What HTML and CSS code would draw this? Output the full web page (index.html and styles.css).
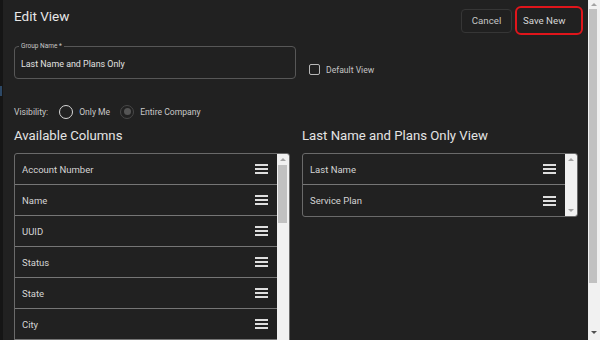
FILE: index.html
```html
<!DOCTYPE html>
<html>
<head>
<meta charset="utf-8">
<link rel="stylesheet" href="styles.css">
</head>
<body>
<div class="edge"><span class="edge-mark"></span></div>
<div class="dialog">
  <header class="head">
    <h1 class="title">Edit View</h1>
    <div class="actions">
      <button class="btn btn-cancel">Cancel</button>
      <button class="btn btn-save">Save New</button>
    </div>
  </header>
  <div class="form-row">
    <fieldset class="field">
      <legend class="field-label">Group Name *</legend>
      <div class="field-value">Last Name and Plans Only</div>
    </fieldset>
    <label class="check"><span class="check-box"></span><span class="check-text">Default View</span></label>
  </div>
  <div class="vis-row">
    <span class="vis-label">Visibility:</span>
    <span class="radio"></span><span class="radio-text">Only Me</span>
    <span class="radio radio-disabled"><span class="radio-dot"></span></span><span class="radio-text">Entire Company</span>
  </div>
  <div class="columns">
    <section class="col">
      <h2 class="col-title">Available Columns</h2>
      <div class="list list-tall">
        <ul class="items">
          <li class="item"><span>Account Number</span><svg class="drag" width="13" height="10" viewBox="0 0 13 10"><path d="M0 1h13M0 5h13M0 9h13"/></svg></li>
          <li class="item"><span>Name</span><svg class="drag" width="13" height="10" viewBox="0 0 13 10"><path d="M0 1h13M0 5h13M0 9h13"/></svg></li>
          <li class="item"><span>UUID</span><svg class="drag" width="13" height="10" viewBox="0 0 13 10"><path d="M0 1h13M0 5h13M0 9h13"/></svg></li>
          <li class="item"><span>Status</span><svg class="drag" width="13" height="10" viewBox="0 0 13 10"><path d="M0 1h13M0 5h13M0 9h13"/></svg></li>
          <li class="item"><span>State</span><svg class="drag" width="13" height="10" viewBox="0 0 13 10"><path d="M0 1h13M0 5h13M0 9h13"/></svg></li>
          <li class="item"><span>City</span><svg class="drag" width="13" height="10" viewBox="0 0 13 10"><path d="M0 1h13M0 5h13M0 9h13"/></svg></li>
        </ul>
        <div class="sbar">
          <span class="arr-box arr-top"><span class="arr arr-up"></span></span>
          <span class="thumb thumb-list"></span>
          <span class="sbar-fill"></span>
        </div>
      </div>
    </section>
    <section class="col">
      <h2 class="col-title">Last Name and Plans Only View</h2>
      <div class="list">
        <ul class="items">
          <li class="item"><span>Last Name</span><svg class="drag" width="13" height="10" viewBox="0 0 13 10"><path d="M0 1h13M0 5h13M0 9h13"/></svg></li>
          <li class="item"><span>Service Plan</span><svg class="drag" width="13" height="10" viewBox="0 0 13 10"><path d="M0 1h13M0 5h13M0 9h13"/></svg></li>
        </ul>
        <div class="sbar">
          <span class="arr-box arr-top"><span class="arr arr-up"></span></span>
          <span class="sbar-fill"></span>
          <span class="arr-box arr-bottom"><span class="arr arr-down"></span></span>
        </div>
      </div>
    </section>
  </div>
</div>
<div class="pagebar">
  <span class="arr-box page-top"><span class="arr arr-up"></span></span>
  <span class="thumb thumb-page"></span>
  <span class="sbar-fill"></span>
  <span class="arr-box page-bottom"><span class="arr arr-down"></span></span>
</div>
</body>
</html>
```

FILE: styles.css
```css
html, body {
  margin: 0;
  height: 340px;
  overflow: hidden;
}

body {
  display: flex;
  background: #212121;
  font-family: Roboto, "Liberation Sans", sans-serif;
  color: #d6d6d6;
}

.edge {
  width: 3px;
  flex-shrink: 0;
  background: #151515;
  display: flex;
  flex-direction: column;
}

.edge-mark {
  display: block;
  width: 2px;
  height: 10px;
  margin-top: 86px;
  background: #2c4866;
}

.dialog {
  flex: 1;
  min-width: 0;
  padding: 0 10px 0 11px;
  display: flex;
  flex-direction: column;
}

/* header */
.head {
  height: 42px;
  flex-shrink: 0;
  display: flex;
  justify-content: space-between;
  align-items: flex-start;
}

.title {
  margin: 8px 0 0;
  font-size: 13.5px;
  line-height: 16px;
  font-weight: 400;
  color: #e8e8e8;
}

.actions {
  margin-top: 6px;
  margin-right: -5px;
  display: flex;
  align-items: center;
  gap: 3px;
}

.btn {
  font-family: inherit;
  font-size: 9.7px;
  background: transparent;
  box-sizing: border-box;
  margin: 0;
  cursor: pointer;
}

.btn-cancel {
  height: 24px;
  width: 51px;
  padding: 0;
  border: 1px solid #363636;
  border-radius: 4px;
  color: #c4c4c4;
  background: #202020;
}

.btn-save {
  height: 29px;
  width: 68px;
  padding: 0 13px 0 6px;
  text-align: left;
  border: 2px solid #e0151b;
  border-radius: 6px;
  color: #d6d6d6;
}

/* form row */
.form-row {
  flex-shrink: 0;
  display: flex;
  align-items: flex-start;
  gap: 13px;
}

.field {
  width: 282px;
  box-sizing: border-box;
  margin: 0;
  padding: 0 4px;
  border: 1px solid #575757;
  border-radius: 4px;
}

.field-label {
  font-size: 6.5px;
  line-height: 9px;
  padding: 0 2px;
  color: #c6c6c6;
}

.field-value {
  font-size: 8.9px;
  line-height: 27px;
  padding-left: 2px;
  color: #e2e2e2;
}

.check {
  margin-top: 22px;
  display: flex;
  align-items: center;
  gap: 6px;
}

.check-box {
  width: 11px;
  height: 11px;
  box-sizing: border-box;
  border: 1.5px solid #b8b8b8;
  border-radius: 2px;
}

.check-text {
  font-size: 8.6px;
  color: #c4c4c4;
}

/* visibility */
.vis-row {
  margin-top: 23.5px;
  height: 18px;
  flex-shrink: 0;
  display: flex;
  align-items: center;
  font-size: 8.6px;
  color: #c8c8c8;
}

.vis-label {
  margin-right: 11px;
}

.radio {
  width: 14px;
  height: 14px;
  box-sizing: border-box;
  border: 1.5px solid #d8d8d8;
  border-radius: 50%;
  display: flex;
  align-items: center;
  justify-content: center;
  margin-right: 6px;
}

.radio-disabled {
  border-color: #474747;
}

.radio-dot {
  width: 7px;
  height: 7px;
  border-radius: 50%;
  background: #555;
}

.radio-text {
  margin-right: 10px;
}

/* columns */
.columns {
  margin-top: 7.5px;
  flex-shrink: 0;
  display: flex;
  gap: 12px;
}

.col {
  width: 276px;
}

.col-title {
  margin: 0 0 9px;
  font-size: 13.2px;
  line-height: 16px;
  font-weight: 400;
  color: #e4e4e4;
}

.list {
  display: flex;
  border: 1px solid #6a6a6a;
  border-radius: 3px;
  overflow: hidden;
}

.list-tall {
  height: 220px;
}

.items {
  flex: 1;
  margin: 0;
  padding: 0;
  list-style: none;
}

.item {
  height: 31px;
  box-sizing: border-box;
  border-bottom: 1px solid #767676;
  display: flex;
  align-items: center;
  justify-content: space-between;
  padding: 0 9px 0 7px;
  font-size: 9.5px;
  color: #d4d4d4;
}

.item:last-child {
  border-bottom: none;
}

.list-tall .item:last-child {
  border-bottom: 1px solid #767676;
}

.drag {
  display: block;
  stroke: #dedede;
  stroke-width: 1.8;
  fill: none;
}

/* scrollbars */
.sbar {
  width: 12px;
  flex-shrink: 0;
  background: #f1f1f1;
  display: flex;
  flex-direction: column;
}

.sbar-fill {
  flex: 1;
}

.arr-box {
  display: flex;
  align-items: center;
  justify-content: center;
  flex-shrink: 0;
}

.arr-top {
  height: 11px;
}

.arr-bottom {
  height: 12px;
}

.arr {
  width: 0;
  height: 0;
  border-left: 3px solid transparent;
  border-right: 3px solid transparent;
}

.arr-up {
  border-bottom: 3px solid #a3a3a3;
}

.arr-down {
  border-top: 3px solid #a3a3a3;
}

.thumb {
  display: block;
  background: #c1c1c1;
  flex-shrink: 0;
}

.thumb-list {
  height: 58px;
  margin: 0 2px 0 1px;
}

.pagebar {
  width: 12px;
  flex-shrink: 0;
  background: #f1f1f1;
  display: flex;
  flex-direction: column;
}

.page-top {
  height: 9px;
}

.thumb-page {
  height: 274px;
  margin: 0 3px 0 1px;
}

.page-bottom {
  height: 15px;
}

.page-bottom .arr-down {
  border-top-color: #505050;
}
```
